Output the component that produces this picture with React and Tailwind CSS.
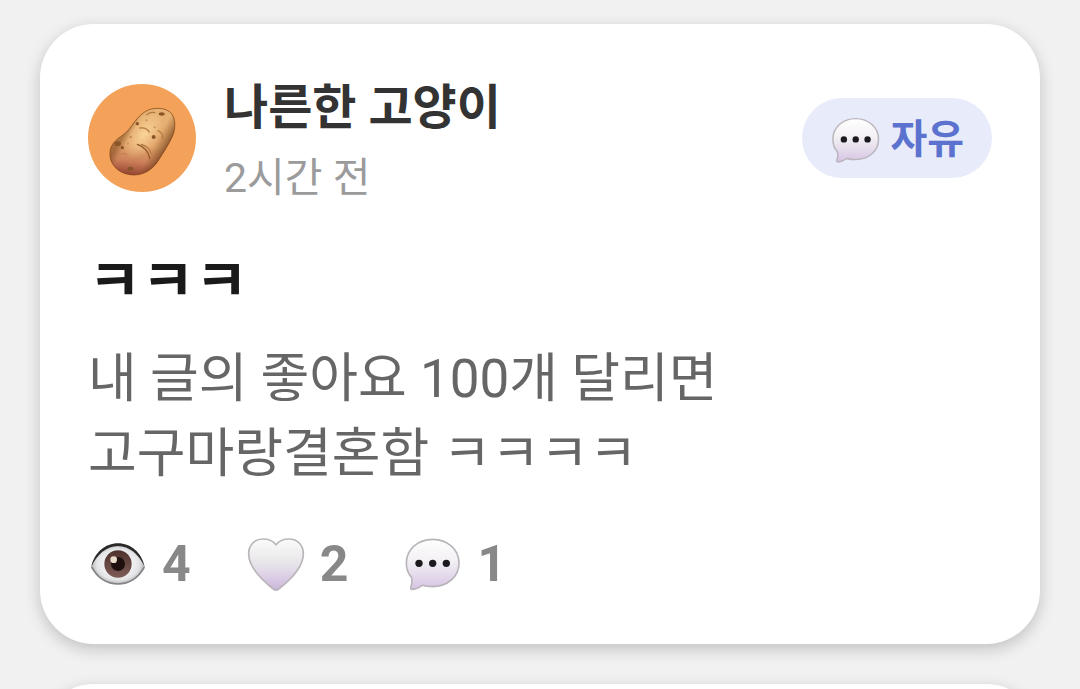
import React from "react";

const post = {
  author: "나른한 고양이",
  time: "2시간 전",
  category: "자유",
  title: "ㅋㅋㅋ",
  lines: ["내 글의 좋아요 100개 달리면", "고구마랑결혼함 ㅋㅋㅋㅋ"],
  views: 4,
  likes: 2,
  comments: 1,
};

const PotatoIcon = () => (
  <svg viewBox="24 24 324 324" className="w-full h-full" aria-hidden="true">
    <defs>
      <linearGradient id="potatoSkin" x1="0.55" y1="0.1" x2="0.45" y2="1">
        <stop offset="0" stopColor="#e6b172" />
        <stop offset="0.5" stopColor="#e2a56b" />
        <stop offset="0.78" stopColor="#cc8159" />
        <stop offset="1" stopColor="#9a4735" />
      </linearGradient>
      <linearGradient id="potatoShade" gradientUnits="userSpaceOnUse" x1="140" y1="160" x2="262" y2="228">
        <stop offset="0" stopColor="#6b3a10" stopOpacity="0.45" />
        <stop offset="0.14" stopColor="#6b3a10" stopOpacity="0" />
        <stop offset="0.68" stopColor="#6b3a10" stopOpacity="0" />
        <stop offset="1" stopColor="#5a2a0c" stopOpacity="0.75" />
      </linearGradient>
      <radialGradient id="potatoLight">
        <stop offset="0" stopColor="#fbd59a" stopOpacity="0.95" />
        <stop offset="1" stopColor="#fbd59a" stopOpacity="0" />
      </radialGradient>
      <path
        id="potatoShape"
        d="M205 102C224 94 258 94 274 112C290 132 286 166 274 188C262 212 250 230 236 252C216 286 182 301 150 296C112 291 87 262 90 228C92 206 106 192 130 176C158 156 166 120 205 102Z"
      />
    </defs>
    <use href="#potatoShape" fill="url(#potatoSkin)" />
    <ellipse cx="192" cy="176" rx="44" ry="84" transform="rotate(35 192 176)" fill="url(#potatoLight)" />
    <use href="#potatoShape" fill="url(#potatoShade)" stroke="#7d4015" strokeOpacity="0.7" strokeWidth="3" />
    <g fill="none" stroke="#b07a42" strokeWidth="4" strokeLinecap="round">
      <path d="M180 156C192 154 202 158 208 168" />
      <path d="M172 205C192 212 206 226 209 247" stroke="#8f5527" />
      <path d="M184 205C200 210 210 220 213 232" />
      <path d="M234 164C244 168 249 178 247 187" />
      <path d="M200 116C208 110 216 108 224 110" />
      <path d="M118 237C124 232 132 231 140 235" stroke="#c68252" />
    </g>
    <g fill="#8a5528">
      <ellipse cx="113" cy="203" rx="10" ry="7" />
      <ellipse cx="245" cy="114" rx="9" ry="5" />
      <ellipse cx="151" cy="278" rx="9" ry="6" />
      <circle cx="127" cy="215" r="5" />
      <circle cx="172" cy="143" r="5" />
      <circle cx="221" cy="183" r="6" />
    </g>
    <g fill="#c98f56">
      <circle cx="199" cy="133" r="3" />
      <circle cx="152" cy="183" r="4" />
      <circle cx="180" cy="243" r="4" />
      <circle cx="224" cy="154" r="3" />
      <circle cx="144" cy="203" r="3" />
    </g>
  </svg>
);

const BubbleIcon = ({ id, className }) => (
  <svg viewBox="310 40 180 180" className={className} aria-hidden="true">
    <defs>
      <linearGradient id={`${id}Fill`} x1="0" y1="0" x2="0" y2="1">
        <stop offset="0" stopColor="#ffffff" />
        <stop offset="0.4" stopColor="#f4f2f4" />
        <stop offset="0.7" stopColor="#e6dcec" />
        <stop offset="1" stopColor="#d6c3e4" />
      </linearGradient>
    </defs>
    <path
      d="M399 56C444 56 478 87 478 127C478 168 444 198 399 198C387 198 377 197 368 194C360 200 348 206 337 206C333 206 333 203 334 199C337 190 338 180 336 171C325 159 320 144 320 127C320 87 354 56 399 56Z"
      fill={`url(#${id}Fill)`}
      stroke="#b9b5bb"
      strokeWidth="5"
    />
    <g fill="#1c1a1c">
      <circle cx="358" cy="128" r="11" />
      <circle cx="399" cy="128" r="11" />
      <circle cx="440" cy="128" r="11" />
    </g>
  </svg>
);

const HeartIcon = () => (
  <svg viewBox="498 40 180 180" className="size-15" aria-hidden="true">
    <defs>
      <linearGradient id="heartFill" x1="0" y1="0" x2="0" y2="1">
        <stop offset="0" stopColor="#fbfbfb" />
        <stop offset="0.3" stopColor="#efeeef" />
        <stop offset="0.55" stopColor="#e5e0e8" />
        <stop offset="0.8" stopColor="#d8c8e4" />
        <stop offset="1" stopColor="#c9b6d8" />
      </linearGradient>
    </defs>
    <path
      d="M588 72C578 60 564 55 549 55C523 55 506 74 506 99C506 140 548 180 580 205C585 209 591 209 596 205C628 180 670 140 670 99C670 74 653 55 627 55C612 55 598 60 588 72Z"
      fill="url(#heartFill)"
      stroke="#b9b5bb"
      strokeWidth="5"
    />
  </svg>
);

const EyeIcon = () => (
  <svg viewBox="24 40 180 180" className="size-15" aria-hidden="true">
    <defs>
      <radialGradient id="eyeWhite">
        <stop offset="0.5" stopColor="#f3f3f4" />
        <stop offset="0.8" stopColor="#e3e4e6" />
        <stop offset="1" stopColor="#b5b5b8" />
      </radialGradient>
      <linearGradient id="iris" x1="0" y1="0" x2="0" y2="1">
        <stop offset="0" stopColor="#4e322e" />
        <stop offset="1" stopColor="#7e5c56" />
      </linearGradient>
    </defs>
    <path
      d="M34 139C46 98 78 72 114 72C150 72 182 98 194 139C176 171 147 190 114 190C81 190 52 171 34 139Z"
      fill="url(#eyeWhite)"
    />
    <path d="M35 139C52 171 81 190 114 190C147 190 176 171 193 139" fill="none" stroke="#848286" strokeWidth="5" />
    <path d="M34 139C42 96 76 68 114 68C152 68 186 96 194 139C178 102 148 76 114 76C80 76 50 102 34 139Z" fill="#2b2829" />
    <circle cx="114" cy="130" r="41" fill="url(#iris)" />
    <circle cx="114" cy="130" r="21" fill="#1f1010" />
    <circle cx="101" cy="117" r="10" fill="#eadccb" />
  </svg>
);

const PostCard = ({ post }) => (
  <article className="rounded-[54px] bg-white px-12 pt-11 pb-12 shadow-[0_5px_16px_rgba(0,0,0,0.2)]">
    <header className="flex items-center gap-7">
      <div className="size-27 shrink-0 rounded-full bg-[#f4a259]">
        <PotatoIcon />
      </div>
      <div className="flex-1">
        <h3 className="text-[48px] leading-[80px] font-bold text-[#333333]">{post.author}</h3>
        <p className="text-[41px] leading-[60px] text-[#9b9b9b]">{post.time}</p>
      </div>
      <button type="button" className="flex items-center gap-2 rounded-full bg-[#e8ebfa] px-7 pt-3.5 pb-2.5">
        <BubbleIcon id="tagBubble" className="size-13" />
        <span className="text-[40px] leading-[56px] font-bold text-[#5b72cf]">{post.category}</span>
      </button>
    </header>

    <h2 className="mt-9 text-[58px] leading-[74px] font-bold text-[#1a1a1a]">{post.title}</h2>
    <p className="mt-6 text-[53px] leading-[75px] text-[#666666]">
      {post.lines.map((line) => (
        <span key={line} className="block">
          {line}
        </span>
      ))}
    </p>

    <footer className="mt-10 flex items-center gap-[55px] text-[50px] leading-[64px] font-bold text-[#888888]">
      <div className="flex items-center gap-3.5">
        <EyeIcon />
        <span>{post.views}</span>
      </div>
      <button type="button" aria-label="좋아요" className="flex items-center gap-3.5">
        <HeartIcon />
        <span>{post.likes}</span>
      </button>
      <button type="button" aria-label="댓글" className="flex items-center gap-3.5">
        <BubbleIcon id="commentBubble" className="size-15" />
        <span>{post.comments}</span>
      </button>
    </footer>
  </article>
);

export default function App() {
  return (
    <main className="flex h-screen flex-col gap-10 overflow-hidden bg-[#f1f1f1] px-10 pt-6 font-[Roboto,'Noto_Sans_CJK_KR',sans-serif]">
      <PostCard post={post} />
      <article className="min-h-40 shrink-0 rounded-[54px] bg-white shadow-[0_5px_16px_rgba(0,0,0,0.2)]" />
    </main>
  );
}
